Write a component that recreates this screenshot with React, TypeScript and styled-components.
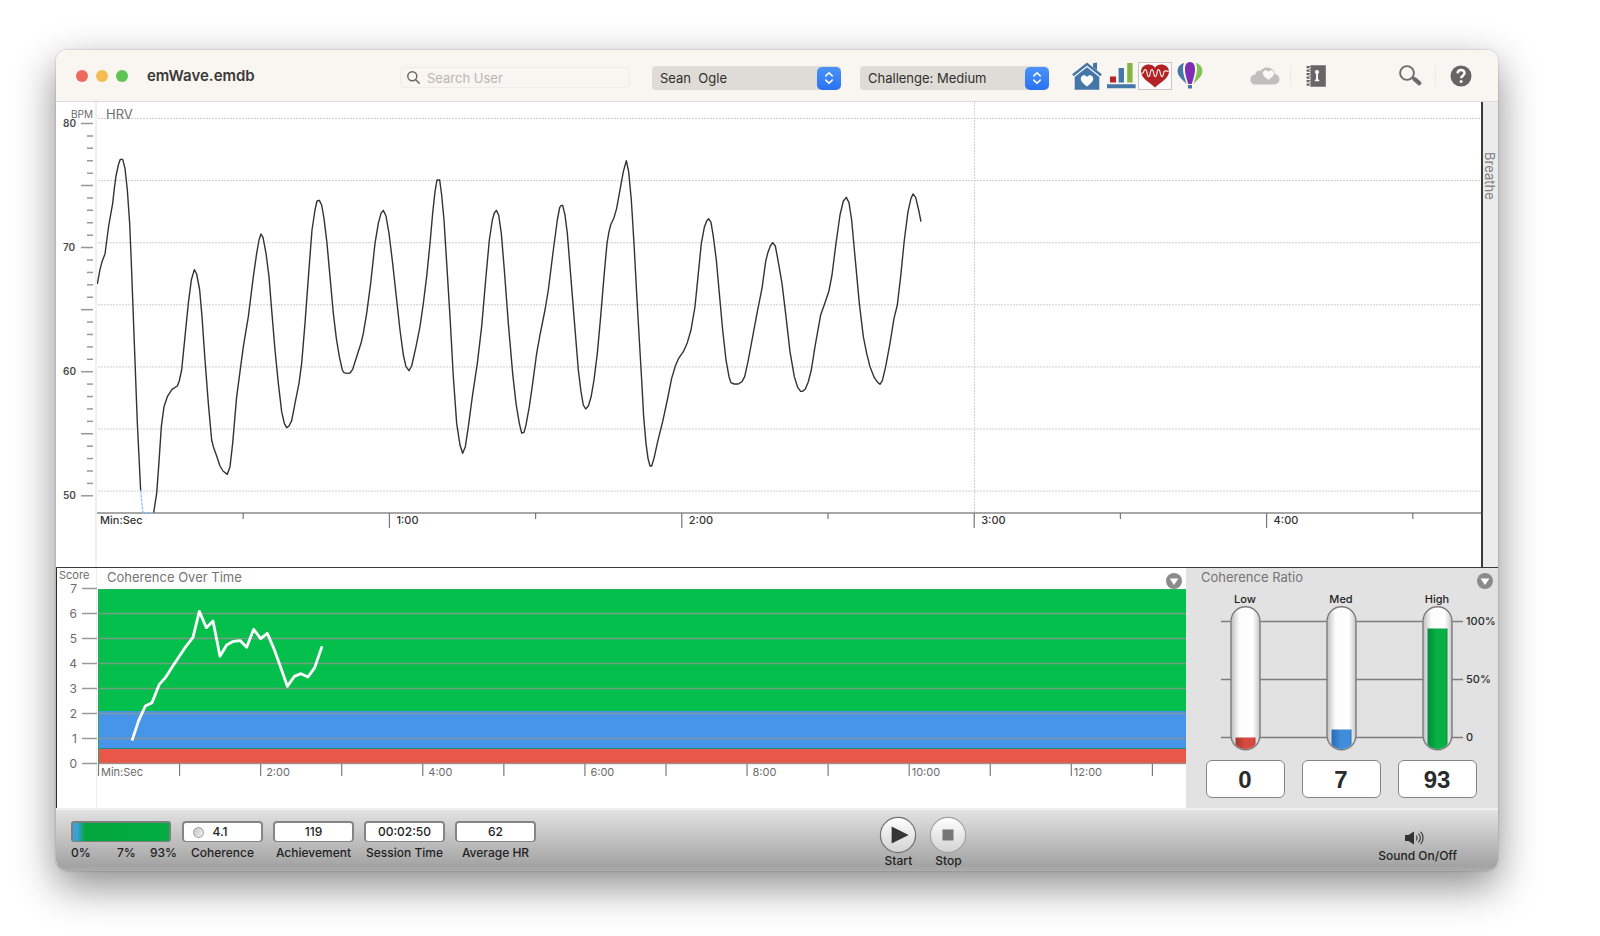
import React from "react";
import styled, { createGlobalStyle } from "styled-components";

const GlobalStyle = createGlobalStyle`
  *, *::before, *::after { box-sizing: border-box; }
  body {
    margin: 0;
    background: #ffffff;
    color: #262626;
    font-family: Inter, "Liberation Sans", sans-serif;
    font-size: 12px;
  }
  button, input, select { font: inherit; color: inherit; }
`;

/* ---------- window ---------- */

const Page = styled.main`
  min-height: 100vh;
  padding: 50px 102px 64px 56px;
`;

const Window = styled.div`
  border-radius: 11px;
  overflow: hidden;
  background: #ffffff;
`;

const WindowShadow = styled.div`
  border-radius: 11px;
  box-shadow: 0 0 2px rgba(0, 0, 0, 0.3), 0 15px 42px rgba(0, 0, 0, 0.46);
`;

/* ---------- title bar ---------- */

const TitleBar = styled.header`
  display: flex;
  align-items: center;
  height: 52px;
  padding: 0 26px 0 20px;
  background: #f9f5f1;
  border-bottom: 1px solid #dedad9;
`;

const Lights = styled.div`
  display: flex;
  gap: 8px;
`;

const Light = styled.button<{ $color: string }>`
  width: 12px;
  height: 12px;
  padding: 0;
  border: 0;
  border-radius: 50%;
  background: ${(p) => p.$color};
`;

const Title = styled.h1`
  flex: 0 0 253px;
  margin: 0 0 0 19px;
  font-size: 15px;
  line-height: 20px;
  font-weight: 600;
  color: #3b3938;
`;

const SearchField = styled.label`
  display: flex;
  align-items: center;
  gap: 7px;
  flex: 0 1 230px;
  height: 21px;
  margin-top: 4px;
  padding-left: 6px;
  border: 1px solid #efebe7;
  border-radius: 4px;
`;

const SearchInput = styled.input`
  min-width: 0;
  flex: 1;
  padding: 0;
  border: 0;
  outline: 0;
  background: transparent;
  font-size: 13px;
  line-height: 18px;
  &::placeholder { color: #b9b5b2; opacity: 1; }
`;

const Picker = styled.label<{ $gap: number }>`
  position: relative;
  display: flex;
  flex: 0 1 189px;
  height: 24px;
  margin: 4px 0 0 ${(p) => p.$gap}px;
`;

const PickerSelect = styled.select`
  appearance: none;
  width: 100%;
  padding: 0 28px 0 8px;
  border: 0;
  border-radius: 4px;
  background: #dfdbd6;
  color: #302f2e;
  font-size: 13px;
`;

const PickerKnob = styled.span`
  position: absolute;
  top: 1px;
  right: 0;
  bottom: 0;
  width: 24px;
  display: grid;
  place-items: center;
  border-radius: 5px;
  background: linear-gradient(#4b92f8, #2873f3);
  pointer-events: none;
`;

const Tools = styled.nav`
  display: flex;
  align-items: center;
  margin-left: 23px;
`;

const EndTools = styled(Tools)`
  margin-left: auto;
`;

const Tool = styled.button<{ $gap?: number; $active?: boolean }>`
  display: flex;
  align-items: center;
  justify-content: center;
  height: 28px;
  margin: 0 0 0 ${(p) => p.$gap ?? 0}px;
  padding: 0;
  border: ${(p) => (p.$active ? "1px solid #c9c6c4" : "0")};
  background: ${(p) => (p.$active ? "#fcfafa" : "transparent")};
`;

const Divider = styled.span<{ $left: number; $right: number }>`
  width: 1px;
  height: 20px;
  margin: 0 ${(p) => p.$right}px 0 ${(p) => p.$left}px;
  background: #ebe7e3;
`;

/* ---------- HRV ---------- */

const HrvPanel = styled.section`
  display: flex;
  height: 465px;
`;

const AxisSvg = styled.svg`
  display: block;
  flex: none;
`;

const PlotSvg = styled.svg`
  display: block;
  flex: 1;
  min-width: 0;
  width: 100%;
`;

const BreatheTab = styled.button`
  flex: 0 0 17px;
  display: flex;
  padding: 50px 1px 0 0;
  border: 0;
  border-left: 2px solid #3a3a3a;
  background: #ebebeb;
  color: #7d7d7d;
  font-size: 13px;
  line-height: 14px;
  writing-mode: vertical-rl;
`;

/* ---------- coherence ---------- */

const LowerRow = styled.div`
  display: flex;
  height: 241px;
  border-top: 1px solid #3a3a3a;
`;

const CoherencePanel = styled.section`
  display: flex;
  flex: 1;
  min-width: 0;
  border-left: 1px solid #2c2c2c;
`;

const CoherenceBody = styled.div`
  display: flex;
  flex-direction: column;
  flex: 1;
  min-width: 0;
`;

const PanelHead = styled.div<{ $left: number; $right: number }>`
  display: flex;
  justify-content: space-between;
  height: 21px;
  padding: 0 ${(p) => p.$right}px 0 ${(p) => p.$left}px;
`;

const PanelTitle = styled.h2`
  margin: 0;
  font-size: 13px;
  line-height: 19px;
  font-weight: 400;
  color: #747474;
`;

const Disclosure = styled.button`
  width: 16px;
  height: 16px;
  margin-top: 5px;
  padding: 0;
  border: 0;
  background: transparent;
  line-height: 0;
`;

const RatioPanel = styled.section`
  flex: 0 0 312px;
  background: #e2e2e2;
`;

const RatioGrid = styled.div`
  display: grid;
  grid-template-columns: repeat(3, 96px);
  margin-left: 11px;
  justify-items: center;
`;

const RatioName = styled.span`
  padding-top: 4px;
  font-size: 11px;
  line-height: 13px;
  font-weight: 500;
  color: #1f1f1f;
`;

const RatioSvg = styled.svg`
  display: block;
  margin-bottom: 8px;
`;

const RatioValue = styled.output`
  display: block;
  width: 79px;
  height: 38px;
  border: 1px solid #858585;
  border-radius: 6px;
  background: #ffffff;
  color: #2b2b2b;
  font: 700 24px/37px "Liberation Sans", sans-serif;
  text-align: center;
`;

/* ---------- footer ---------- */

const Footer = styled.footer`
  display: grid;
  grid-template-columns: 33fr auto 20fr;
  height: 63px;
  padding: 0 41px 0 15px;
  border-top: 2px solid #f1f1f1;
  background: linear-gradient(#e2e2e2, #a3a3a3 92%, #adadad);
  color: #232323;
`;

const Stats = styled.div`
  display: flex;
  gap: 10px;
  padding-top: 11px;
`;

const Stat = styled.div`
  display: flex;
  flex-direction: column;
  align-items: center;
  gap: 3px;
  width: 81px;
`;

const StatBox = styled.output<{ $orb?: boolean }>`
  display: flex;
  align-items: center;
  justify-content: center;
  gap: 8px;
  width: 100%;
  height: 21px;
  padding-right: ${(p) => (p.$orb ? 24 : 0)}px;
  border: 2px solid #858585;
  border-bottom-width: 1px;
  border-radius: 4px;
  background: #ffffff;
  font-size: 12px;
  line-height: 18px;
  font-weight: 500;
`;

const StatLabel = styled.span`
  font-size: 12px;
  line-height: 16px;
  font-weight: 500;
  white-space: nowrap;
`;

const Balance = styled.div`
  width: 101px;
`;

const BalanceBar = styled.div`
  height: 21px;
  margin: 0 1px 3px 0;
  border: 2px solid #7c807d;
  border-bottom-width: 1px;
  border-radius: 3px;
  background: linear-gradient(90deg, #3ba0dd 0, #3ba0dd 4%, #02a63c 13%, #02ad43);
`;

const BalanceLabels = styled.div`
  display: grid;
  grid-template-columns: 46px 1fr auto;
  margin-right: -5px;
`;

const Orb = styled.span`
  width: 11px;
  height: 11px;
  border: 1px solid #9d9d9d;
  border-radius: 50%;
  background: linear-gradient(120deg, #c4c4c4, #f1f1f1);
`;

const Transport = styled.div`
  display: flex;
  gap: 14px;
  padding-top: 6px;
`;

const RoundButton = styled.button`
  display: flex;
  flex-direction: column;
  align-items: center;
  width: 36px;
  padding: 0;
  border: 0;
  background: transparent;
  font-size: 12px;
  line-height: 13px;
  font-weight: 500;
`;

const SoundButton = styled.button`
  justify-self: end;
  align-self: start;
  display: flex;
  flex-direction: column;
  align-items: center;
  gap: 3px;
  padding: 21px 0 0;
  border: 0;
  background: transparent;
  font-size: 12px;
  line-height: 16px;
  font-weight: 500;
`;

/* ---------- chart data, three units to the pixel ---------- */

const HRV_START = `22,432 30,388 37,362 45,342 50,303 56,258 68,190 73,145 78,108 85,75 91,58 98,58 105,85 112,150
  119,250 124,370 130,530 136,690 142,850 147,950 152,1052`;

const HRV_GAP = `152,1052 155,1085 159,1118 190,1118`;

const HRV_MAIN = `191,1118 200,1060 206,980 214,860 222,800 232,770 246,748 262,738 268,722 275,690
  285,590 295,490 304,420 313,389 320,402 329,450 336,530 345,660 355,790 365,900 370,920 380,948 390,978
  399,993 412,1003 420,980 428,910 440,770 452,680 460,620 475,530 490,410 500,340 507,300 513,282 519,292
  528,340 537,410 545,510 555,630 565,730 575,815 583,850 590,863 597,858 605,842 616,785 627,730 635,670
  645,550 656,400 666,270 675,210 681,183 688,181 695,195 702,235 711,310 720,410 730,520 739,595 748,650
  757,690 762,698 770,700 780,699 788,688 800,650 813,610 820,580 830,520 842,430 855,310 865,250 873,220
  880,211 888,228 897,280 908,370 920,480 930,570 940,645 948,680 957,692 965,678 978,620 990,560 1000,490
  1010,410 1020,310 1028,220 1035,155 1041,120 1049,120 1055,165 1062,240 1072,400 1080,530 1090,710
  1100,850 1110,915 1118,940 1126,920 1135,860 1147,770 1162,670 1175,560 1187,420 1198,300 1207,240
  1213,219 1219,211 1226,225 1234,280 1243,390 1255,550 1268,700 1278,790 1288,850 1295,879 1302,877
  1308,855 1318,800 1328,730 1340,640 1350,585 1365,510 1375,450 1390,330 1402,240 1409,203 1413,197
  1418,196 1425,225 1432,280 1440,380 1452,530 1465,690 1473,755 1480,795 1487,807 1495,798 1503,772
  1512,720 1522,640 1532,530 1542,410 1551,310 1557,275 1562,255 1572,233 1580,205 1590,150 1600,95
  1609,62 1616,95 1624,180 1632,310 1640,460 1648,600 1655,720 1661,830 1668,910 1674,955 1680,978
  1685,978 1692,955 1703,905 1718,845 1732,780 1745,715 1756,678 1766,655 1780,635 1792,608 1803,570
  1815,500 1825,400 1834,310 1843,262 1850,243 1856,236 1863,247 1870,290 1879,360 1888,460 1898,570
  1908,660 1917,710 1923,728 1932,732 1945,732 1956,725 1964,710 1974,665 1988,590 2002,515 2016,445
  2027,365 2033,340 2041,318 2048,308 2056,318 2063,355 2076,430 2088,530 2100,635 2113,710 2123,742
  2132,754 2138,754 2146,747 2155,725 2164,690 2175,620 2192,525 2205,488 2217,452 2226,405 2238,310
  2250,225 2260,183 2269,172 2277,188 2285,240 2295,350 2308,490 2320,590 2330,640 2340,680 2353,713
  2363,727 2370,733 2377,722 2387,680 2400,610 2412,535 2422,495 2432,410 2443,300 2454,215 2463,175
  2469,162 2477,172 2486,210 2493,245`;

const COHERENCE = `246,557 266,497 286,453 306,443 328,388 346,368 367,335 388,304 408,274 429,247 448,169
  469,218 489,198 510,304 530,270 550,259 571,257 590,277 611,223 632,251 652,235 673,284 692,337 712,394
  733,364 753,356 774,366 794,338 816,274`;

const range = (n: number) => Array.from({ length: n }, (_, i) => i);

/* ---------- charts ---------- */

const BpmAxis = () => (
  <AxisSvg width="41" height="465" aria-hidden="true">
    <rect x="39" width="2" height="465" fill="#efefef" />
    <text x="15" y="16" fontSize="10" fill="#6b6b6b">BPM</text>
    {range(31).map((i) => {
      const y = 21.5 + i * 12.41;
      const major = i % 5 === 0;
      return <line key={i} x1={major ? 25 : 31} x2="37" y1={y} y2={y} stroke="#989898" strokeWidth="1.5" />;
    })}
    {[80, 70, 60, 50].map((v, i) => (
      <text key={v} x="7" y={25 + i * 124} fontSize="10" fontWeight="600" fill="#4a4a4a">{v}</text>
    ))}
  </AxisSvg>
);

const MINUTE = 292.4;

const HrvPlot = () => (
  <PlotSvg height="465" role="img" aria-label="Heart rate variability">
    {range(7).map((i) => (
      <line key={i} x1="1" x2="100%" y1={16.5 + i * 62.1} y2={16.5 + i * 62.1} stroke="#cfcfcf" strokeWidth="1" strokeDasharray="2 1" />
    ))}
    <line x1="877.5" x2="877.5" y1="0" y2="411" stroke="#d2d2d2" strokeDasharray="2 1" />
    <text x="9" y="17" fontSize="13" fill="#6f6f6f">HRV</text>
    <line x1="0" x2="100%" y1="411" y2="411" stroke="#8a8a8a" strokeWidth="1.4" />
    {range(9).map((i) => {
      const x = ((i + 1) * MINUTE) / 2;
      const whole = i % 2 === 1;
      return (
        <React.Fragment key={i}>
          <line x1={x} x2={x} y1="411" y2={whole ? 426 : 417} stroke="#777777" strokeWidth="1.2" />
          {whole && <text x={x + 7} y="422" fontSize="11" fontWeight="500" fill="#333333">{(i + 1) / 2}:00</text>}
        </React.Fragment>
      );
    })}
    <text x="3" y="422" fontSize="11" fontWeight="500" fill="#333333">Min:Sec</text>
    <g transform="translate(-7 38) scale(0.33333)" fill="none" stroke="#333333" strokeWidth="4.2" strokeLinejoin="round">
      <polyline points={HRV_START} />
      <polyline points={HRV_MAIN} />
      <polyline points={HRV_GAP} stroke="#8fc6fb" strokeDasharray="9 3" />
    </g>
  </PlotSvg>
);

const ScoreAxis = () => (
  <AxisSvg width="40" height="240" aria-hidden="true">
    <rect x="39" width="1" height="240" fill="#efefef" />
    <text x="2" y="11" fontSize="11" fill="#6b6b6b">Score</text>
    {range(8).map((i) => (
      <React.Fragment key={i}>
        <line x1="25" x2="40" y1={20.5 + i * 25} y2={20.5 + i * 25} stroke="#989898" strokeWidth="1.5" />
        <text x="20" y={25 + i * 25} fontSize="12" fill="#6b6b6b" textAnchor="end">{7 - i}</text>
      </React.Fragment>
    ))}
  </AxisSvg>
);

const CoherencePlot = () => (
  <PlotSvg height="219" role="img" aria-label="Coherence score over time">
    <rect x="2" width="100%" height="122" fill="#04bf4b" />
    <rect x="2" y="122" width="100%" height="38" fill="#4695e8" />
    <rect x="2" y="160" width="100%" height="15" fill="#e9574b" />
    <rect x="2" y="159" width="100%" height="1" fill="#1c8f84" />
    <rect x="1" width="1" height="175" fill="#3aa061" />
    {range(8).map((i) => (
      <line key={i} x1="2" x2="100%" y1={i * 25 - 0.5} y2={i * 25 - 0.5} stroke="#909890" strokeOpacity="0.8" strokeWidth="1.6" />
    ))}
    {range(14).map((i) => (
      <line key={i} x1={1.5 + i * 81.07} x2={1.5 + i * 81.07} y1="175" y2="187" stroke="#7b7b7b" strokeWidth="1.2" />
    ))}
    <text x="4" y="187" fontSize="11" fill="#6b6b6b">Min:Sec</text>
    {[2, 4, 6, 8, 10, 12].map((m) => (
      <text key={m} x={(m > 9 ? 4 : 7) + m * 81.07} y="187" fontSize="11" fill="#6b6b6b">{m}:00</text>
    ))}
    <polyline
      points={COHERENCE}
      transform="translate(-47 -34) scale(0.33333)"
      fill="none"
      stroke="#ffffff"
      strokeWidth="8.4"
      strokeLinejoin="round"
    />
  </PlotSvg>
);

const RATIOS = [
  { name: "Low", value: 0, top: 132, color: "#d64a40", dark: "#a4372f" },
  { name: "Med", value: 7, top: 124, color: "#3f8bdc", dark: "#2b6cb0" },
  { name: "High", value: 93, top: 23, color: "#06b043", dark: "#06893a" },
];

const RatioTubes = () => (
  <RatioSvg width="312" height="146" role="img" aria-label="Low 0, medium 7, high 93 percent">
    <defs>
      <linearGradient id="glass">
        <stop offset="0" stopColor="#bdbdbd" />
        <stop offset="0.28" stopColor="#fbfbfb" />
        <stop offset="0.75" stopColor="#ffffff" />
        <stop offset="1" stopColor="#c6c6c6" />
      </linearGradient>
      {RATIOS.map((r) => (
        <linearGradient key={r.name} id={`fill-${r.name}`}>
          <stop offset="0" stopColor={r.dark} />
          <stop offset="0.45" stopColor={r.color} />
          <stop offset="0.9" stopColor={r.color} />
          <stop offset="1" stopColor={r.dark} />
        </linearGradient>
      ))}
    </defs>
    {["100%", "50%", "0"].map((label, i) => (
      <React.Fragment key={label}>
        <line x1="35" x2="277" y1={15.5 + i * 58} y2={15.5 + i * 58} stroke="#7e7e7e" strokeWidth="1.4" />
        <text x="280" y={19 + i * 58} fontSize="11" fontWeight="500" fill="#2a2a2a">{label}</text>
      </React.Fragment>
    ))}
    {RATIOS.map((r, i) => {
      const x = 45 + i * 96;
      return (
        <React.Fragment key={r.name}>
          <clipPath id={`tube-${r.name}`}>
            <rect x={x + 1} y="1" width="27" height="142" rx="13.5" />
          </clipPath>
          <rect x={x} y="0.7" width="29" height="143" rx="14.5" fill="url(#glass)" stroke="#7c7c7c" strokeWidth="1.4" />
          <rect x={x + 4.5} y={r.top - 0.5} width="20" height={144 - r.top} fill={`url(#fill-${r.name})`} clipPath={`url(#tube-${r.name})`} />
        </React.Fragment>
      );
    })}
  </RatioSvg>
);

/* ---------- icons ---------- */

const DisclosureIcon = () => (
  <svg width="16" height="16">
    <circle cx="8" cy="8" r="8" fill="#8b8b8b" />
    <path d="M3.6 5.4h8.8L8 12z" fill="#ffffff" />
  </svg>
);

const SearchGlyph = () => (
  <svg width="13" height="13" fill="none" stroke="#6a6764" strokeWidth="1.5" strokeLinecap="round">
    <circle cx="5.3" cy="5.3" r="4.5" />
    <path d="M8.7 8.7l3.6 3.6" />
  </svg>
);

const Chevrons = () => (
  <svg width="10" height="14" fill="none" stroke="#ffffff" strokeWidth="1.6" strokeLinecap="round" strokeLinejoin="round">
    <path d="M1.8 4.9L5 1.7l3.2 3.2M1.8 9.1L5 12.3l3.2-3.2" />
  </svg>
);

const HomeIcon = () => (
  <svg width="30" height="28">
    <path d="M21 1.2l4-.6v7.6l-4-3.2z" fill="#4577a8" />
    <path d="M.9 13.2L15 2l14.1 11.2" fill="none" stroke="#4577a8" strokeWidth="2.5" />
    <path d="M2.7 15L15 5.3l12.3 9.700V27.7H2.7z" fill="#4577a8" />
    <path d="M15 24.6c-3.6-3-6.2-4.9-6.2-7.8 0-3.9 4.6-4.7 6.2-1.6 1.6-3.1 6.2-2.3 6.2 1.6 0 2.9-2.6 4.8-6.2 7.8z" fill="#ffffff" />
  </svg>
);

const BarsIcon = () => (
  <svg width="29" height="26">
    <path d="M3 13.5h6v6H3z" fill="#b8232a" />
    <path d="M11.6 5h5.4v14.5h-5.4z" fill="#4577a8" />
    <path d="M20.2 0h5.4v19.5h-5.4z" fill="#86b541" />
    <path d="M0 21.2h28.6v4H0z" fill="#4577a8" />
  </svg>
);

const HeartIcon = () => (
  <svg width="32" height="26">
    <path d="M16 24.6C12.2 20.6 2 15.9 2 8.6 2 1.2 12.7-.9 16 4.8 19.3-.9 30 1.2 30 8.6c0 7.3-10.2 12-14 16z" fill="#b32225" />
    <path d="M2.2 10c1.6.8 2.2-.4 2.8-2.2.5-1.600 2.1-1.600 2.5 0l1.1 4.600c.4 1.600 1.800 1.600 2.1 0l1.1-4.600c.4-1.700 1.900-1.700 2.300 0l1.1 4.600c.4 1.600 1.800 1.600 2.200 0l1-4.600c.4-1.700 1.900-1.700 2.300 0l1.200 4.600c.4 1.600 1.700 1.600 2.1 0l1-3.600c.5-1.600 2.300-1.100 4.700-.4" fill="none" stroke="#f8e9e8" strokeWidth="1.2" />
  </svg>
);

const BalloonIcon = () => (
  <svg width="26" height="27">
    <path d="M7.2 1C2.600 2.200.4 5.600.6 9.400c.3 4.700 5 8.600 9 12.600C7.300 15.600 4.200 6.500 7.200 1z" fill="#4577a8" />
    <path d="M18.800 1c4.600 1.200 6.800 4.600 6.600 8.400-.3 4.700-5 8.600-9 12.600C18.700 15.600 21.800 6.500 18.800 1z" fill="#7fc353" />
    <path d="M13 0C9.300 0 7.800 3.600 8 8c.2 4.800 1.900 9.600 3.300 14h3.400c1.400-4.400 3.100-9.200 3.300-14 .2-4.400-1.300-8-5-8z" fill="#7e2fb4" />
    <path d="M11 23h4v3.500h-4z" fill="#4577a8" />
  </svg>
);

const CloudIcon = () => (
  <svg width="30" height="18">
    <path d="M5.500 17.500C2 17.500.5 15 .5 12.400c0-3 2.200-4.800 4.900-4.900C5.800 4.700 8 3.300 10.400 3.900 12 1.500 14.600.3 17.400.5c4.200.2 7.300 2.900 7.600 6.600 2.700.6 4.500 2.600 4.500 5.200 0 3-2.300 5.200-5.200 5.200z" fill="#c1bfbd" />
    <path d="M18.500 12.800c-2.800-2.200-5.600-4-5.600-6.600 0-3.400 4.100-4 5.600-1.400 1.500-2.600 5.600-2 5.600 1.400 0 2.600-2.800 4.400-5.600 6.600z" fill="#fbf9f8" />
  </svg>
);

const JournalIcon = () => (
  <svg width="20" height="22">
    <path d="M4.5.2H19.800v21.600H4.500z" fill="#676565" />
    <path d="M1.5 2.200h3.300M1.5 5.700h3.300M1.5 9.200h3.300M1.5 12.700h3.300M1.5 16.200h3.300M1.5 19.700h3.300" stroke="#676565" strokeWidth="2.3" strokeLinecap="round" />
    <path d="M3.600 2.200h1M3.600 5.700h1M3.600 9.200h1M3.600 12.700h1M3.600 16.200h1M3.600 19.700h1" stroke="#f1eeec" strokeWidth="1.1" strokeLinecap="round" />
    <circle cx="11" cy="7" r="2.100" fill="#fff" />
    <path d="M10.100 8h1.900v6.200l1.300.700V16.200H8.800V14.900l1.300-.700z" fill="#fff" />
  </svg>
);

const MagnifierIcon = () => (
  <svg width="23" height="21" fill="none">
    <circle cx="8" cy="8" r="6.900" stroke="#6d6a68" strokeWidth="1.9" />
    <path d="M13 12.300l2.600 2.200" stroke="#6d6a68" strokeWidth="2" />
    <path d="M15.600 14.200l4.600 4" stroke="#6d6a68" strokeWidth="4.2" strokeLinecap="round" />
  </svg>
);

const HelpIcon = () => (
  <svg width="22" height="22">
    <circle cx="11" cy="11" r="10.5" fill="#676463" />
    <path d="M7.600 8.400C7.700 3.900 14.500 4 14.500 8.100c0 2.500-3.400 2.700-3.400 5.200" fill="none" stroke="#fff" strokeWidth="2.5" />
    <circle cx="11.1" cy="16.5" r="1.5" fill="#fff" />
  </svg>
);

const TransportIcon = ({ kind }: { kind: "play" | "stop" }) => (
  <svg width="38" height="38" viewBox="-1 -1 38 38">
    <defs>
      <linearGradient id={`round-${kind}`} x2="0" y2="1">
        <stop offset="0" stopColor="#ffffff" />
        <stop offset="1" stopColor="#d2d2d2" />
      </linearGradient>
    </defs>
    <circle cx="18" cy="18" r="17.6" fill={`url(#round-${kind})`} stroke={kind === "play" ? "#707070" : "#a2a2a2"} strokeWidth="1.2" />
    {kind === "play" ? <path d="M11.600 9.400v17.200L28.600 18z" fill="#363636" /> : <path d="M12.500 12.500h11v11h-11z" fill="#757575" />}
  </svg>
);

const SpeakerIcon = () => (
  <svg width="26" height="14" viewBox="3 0 26 14" fill="none" stroke="#333333" strokeWidth="1.1" strokeLinecap="round">
    <path d="M3 4h3.400L12 .5v13L6.400 10H3z" fill="#333333" stroke="none" />
    <path d="M14.500 5c.8 1.200.8 2.800 0 4M16.700 3c1.900 2.300 1.900 5.700 0 8M18.900 1.200c2.900 3.400 2.900 8.200 0 11.600" />
  </svg>
);

/* ---------- app ---------- */

const STATS = [
  { label: "Coherence", value: "4.1", orb: true },
  { label: "Achievement", value: "119" },
  { label: "Session Time", value: "00:02:50" },
  { label: "Average HR", value: "62" },
];

export default function App() {
  return (
    <Page>
      <GlobalStyle />
      <WindowShadow>
        <Window>
          <TitleBar>
            <Lights>
              <Light $color="#ec6a5e" aria-label="Close" />
              <Light $color="#f4bd4f" aria-label="Minimize" />
              <Light $color="#5fc454" aria-label="Zoom" />
            </Lights>
            <Title>emWave.emdb</Title>
            <SearchField>
              <SearchGlyph />
              <SearchInput type="text" placeholder="Search User" aria-label="Search User" />
            </SearchField>
            <Picker $gap={22}>
              <PickerSelect aria-label="User" defaultValue="sean">
                <option value="sean">Sean&nbsp; Ogle</option>
              </PickerSelect>
              <PickerKnob><Chevrons /></PickerKnob>
            </Picker>
            <Picker $gap={19}>
              <PickerSelect aria-label="Challenge" defaultValue="medium">
                <option value="medium">Challenge: Medium</option>
              </PickerSelect>
              <PickerKnob><Chevrons /></PickerKnob>
            </Picker>
            <Tools aria-label="Views">
              <Tool aria-label="Home"><HomeIcon /></Tool>
              <Tool aria-label="Progress" $gap={5}><BarsIcon /></Tool>
              <Tool aria-label="Heart rhythm" $gap={2} $active><HeartIcon /></Tool>
              <Tool aria-label="Games" $gap={5}><BalloonIcon /></Tool>
              <Tool aria-label="HeartCloud" $gap={47}><CloudIcon /></Tool>
              <Divider $left={10} $right={15} />
              <Tool aria-label="Journal"><JournalIcon /></Tool>
            </Tools>
            <EndTools aria-label="Help">
              <Tool aria-label="Find"><MagnifierIcon /></Tool>
              <Divider $left={13} $right={14} />
              <Tool aria-label="Help"><HelpIcon /></Tool>
            </EndTools>
          </TitleBar>

          <HrvPanel>
            <BpmAxis />
            <HrvPlot />
            <BreatheTab>Breathe</BreatheTab>
          </HrvPanel>

          <LowerRow>
            <CoherencePanel>
              <ScoreAxis />
              <CoherenceBody>
                <PanelHead $left={10} $right={4}>
                  <PanelTitle>Coherence Over Time</PanelTitle>
                  <Disclosure aria-label="Coherence chart options"><DisclosureIcon /></Disclosure>
                </PanelHead>
                <CoherencePlot />
              </CoherenceBody>
            </CoherencePanel>
            <RatioPanel>
              <PanelHead $left={15} $right={5}>
                <PanelTitle>Coherence Ratio</PanelTitle>
                <Disclosure aria-label="Coherence ratio options"><DisclosureIcon /></Disclosure>
              </PanelHead>
              <RatioGrid>
                {RATIOS.map((r) => <RatioName key={r.name}>{r.name}</RatioName>)}
              </RatioGrid>
              <RatioTubes />
              <RatioGrid>
                {RATIOS.map((r) => <RatioValue key={r.name} aria-label={r.name}>{r.value}</RatioValue>)}
              </RatioGrid>
            </RatioPanel>
          </LowerRow>

          <Footer>
            <Stats>
              <Balance>
                <BalanceBar />
                <BalanceLabels>
                  <StatLabel>0%</StatLabel>
                  <StatLabel>7%</StatLabel>
                  <StatLabel>93%</StatLabel>
                </BalanceLabels>
              </Balance>
              {STATS.map((s) => (
                <Stat key={s.label}>
                  <StatBox $orb={s.orb} aria-label={s.label}>{s.orb && <Orb />}{s.value}</StatBox>
                  <StatLabel>{s.label}</StatLabel>
                </Stat>
              ))}
            </Stats>
            <Transport>
              <RoundButton><TransportIcon kind="play" />Start</RoundButton>
              <RoundButton><TransportIcon kind="stop" />Stop</RoundButton>
            </Transport>
            <SoundButton><SpeakerIcon />Sound On/Off</SoundButton>
          </Footer>
        </Window>
      </WindowShadow>
    </Page>
  );
}
